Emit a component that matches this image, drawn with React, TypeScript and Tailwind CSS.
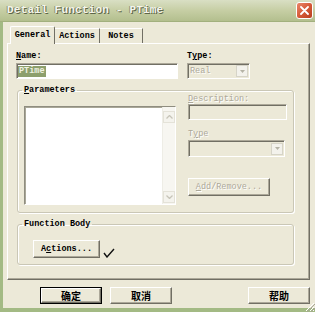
import React from 'react';

const raised =
  "border border-t-white border-l-white border-r-[#716f64] border-b-[#716f64] shadow-[inset_-1px_-1px_0_#aca899]";
const sunken =
  "border border-t-[#aca899] border-l-[#aca899] border-r-white border-b-white shadow-[inset_1px_1px_0_#716f64]";
const etched = "text-[#aca899] [text-shadow:1px_1px_0_#fff]";
const label = "text-[8.5px] leading-[9px] font-bold text-black";

function Chevron({ up }: { up?: boolean }) {
  return (
    <svg width="7" height="4" viewBox="0 0 7 4">
      <path
        d={up ? 'M0.5 3.5 L3.5 0.5 L6.5 3.5' : 'M0.5 0.5 L3.5 3.5 L6.5 0.5'}
        fill="none"
        stroke="#c6c4b8"
        strokeWidth="1.3"
      />
    </svg>
  );
}

function DropArrow() {
  return (
    <div className="w-[12px] h-[12px] border border-[#d6d4c8] bg-[#f3f2ec] flex items-center justify-center">
      <svg width="5" height="3" viewBox="0 0 5 3">
        <path d="M0 0 H5 L2.5 3 Z" fill="#b5b3a6" />
      </svg>
    </div>
  );
}

function Button({ children, isDefault }: { children: React.ReactNode; isDefault?: boolean }) {
  return (
    <div className={isDefault ? 'border border-black' : ''}>
      <div
        className={`${raised} ${isDefault ? 'w-[60px] h-[15px]' : 'w-[62px] h-[17px]'} bg-[#ece9d8] flex items-center justify-center text-[10px] font-bold text-black font-['Noto_Sans_CJK_SC',sans-serif]`}
      >
        {children}
      </div>
    </div>
  );
}

export default function App() {
  return (
    <div className="relative w-[315px] h-[312px] overflow-hidden bg-[#ece9d8] flex flex-col font-['Liberation_Mono','DejaVu_Sans_Mono',monospace]">
      {/* Title bar */}
      <div className="h-[22px] flex items-center justify-between pl-[7px] pr-[2px] bg-gradient-to-b from-[#d9dfc4] via-[#c6cea4] to-[#b3bf8e] border-b border-[#a2b07e]">
        <span className="text-[11px] font-bold tracking-[0.2px] text-[#f4f5ec] [text-shadow:1px_1px_0_#5e6648,-1px_0_0_#8c9470]">
          Detail Function - PTime
        </span>
        <div className="w-[17px] h-[17px] rounded-[3px] border border-white bg-gradient-to-br from-[#e9866a] via-[#d65a38] to-[#b9401f] flex items-center justify-center">
          <svg width="9" height="9" viewBox="0 0 9 9">
            <path d="M1 1 L8 8 M8 1 L1 8" stroke="#fff" strokeWidth="1.8" strokeLinecap="round" />
          </svg>
        </div>
      </div>

      {/* Body */}
      <div className="flex-1 flex flex-col border-l-[3px] border-b-[4px] border-[#a3ba84] pl-[4px] pt-[4px]">
        {/* Tabs */}
        <div className="h-[17px] flex items-end ml-[3px] text-[8.5px] font-bold text-black">
          <div className="relative z-10 -mb-px h-[18px] w-[45px] bg-[#ece9d8] border border-b-0 border-t-white border-l-white border-r-[#716f64] rounded-t-[2px] flex items-center justify-center">
            General
          </div>
          <div className="h-[15px] w-[45px] border-t border-r border-t-white border-r-[#716f64] flex items-center justify-center">
            Actions
          </div>
          <div className="h-[15px] w-[43px] border-t border-r border-t-white border-r-[#716f64] flex items-center justify-center">
            Notes
          </div>
        </div>

        {/* Tab panel */}
        <div className={`relative z-0 w-[303px] h-[237px] ${raised} bg-[#ece9d8] pl-[8px] pt-[8px]`}>
          <div className="flex gap-[9px]">
            <div className="w-[162px]">
              <div className={`${label} h-[11px]`}>
                <span className="underline">N</span>ame:
              </div>
              <div className={`${sunken} h-[16px] bg-white flex items-center pl-px`}>
                <span className="bg-[#8d9f6c] text-[#eef1e2] text-[8.5px] leading-[11px] font-bold px-px">PTime</span>
              </div>
            </div>
            <div className="w-[63px]">
              <div className={`${label} h-[11px]`}>
                T<span className="underline">y</span>pe:
              </div>
              <div className={`${sunken} h-[16px] bg-[#ece9d8] flex items-center justify-between pl-[2px] pr-px`}>
                <span className={`${etched} text-[8.5px]`}>Real</span>
                <DropArrow />
              </div>
            </div>
          </div>

          {/* Parameters group */}
          <fieldset className="ml-px mt-[7px] w-[277px] h-[127px] border border-[#cac7b6] rounded-[3px] shadow-[1px_1px_0_#fff,inset_1px_1px_0_#fff] px-[6px]">
            <legend className={`${label} -ml-[2px] px-[2px]`}>
              <span className="underline">P</span>arameters
            </legend>
            <div className="flex">
              <div className="mt-[11px] w-[152px] h-[99px] border border-t-[#8f8d80] border-l-[#8f8d80] border-r-white border-b-white shadow-[inset_1px_1px_0_#a9a798] bg-white flex justify-end">
                <div className="w-[13px] h-full bg-[#f7f6f1] border-l border-[#eeede6] flex flex-col justify-between pt-[4px] pb-px">
                  <div className="h-[12px] w-[12px] border border-[#e4e2d8] bg-[#f4f3ed] flex items-center justify-center">
                    <Chevron up />
                  </div>
                  <div className="h-[12px] w-[12px] border border-[#e4e2d8] bg-[#f4f3ed] flex items-center justify-center">
                    <Chevron />
                  </div>
                </div>
              </div>
              <div className="ml-[12px] w-[99px] flex flex-col">
                <div className={`${etched} text-[8.5px] leading-[9px] h-[9px]`}>
                  <span className="underline">D</span>escription:
                </div>
                <div className={`${sunken} h-[16px] w-[99px] bg-[#ece9d8]`} />
                <div className={`${etched} text-[8.5px] leading-[9px] h-[10px] mt-[10px]`}>
                  T<span className="underline">y</span>pe
                </div>
                <div className={`${sunken} h-[17px] w-[97px] bg-[#ece9d8] flex items-center justify-end pr-px`}>
                  <DropArrow />
                </div>
                <div className={`${raised} mt-[21px] h-[18px] w-[82px] bg-[#ece9d8] flex items-center justify-center`}>
                  <span className={`${etched} text-[8.5px]`}>
                    <span className="underline">A</span>dd/Remove...
                  </span>
                </div>
              </div>
            </div>
          </fieldset>

          {/* Function Body group */}
          <fieldset className="ml-px mt-[7px] w-[277px] h-[45px] border border-[#cac7b6] rounded-[3px] shadow-[1px_1px_0_#fff,inset_1px_1px_0_#fff]">
            <legend className={`${label} ml-[4px] px-[2px]`}>Function Body</legend>
            <div className="mt-[11px] pl-[15px] flex items-end">
              <div className={`${raised} h-[18px] w-[67px] bg-[#ece9d8] flex items-center justify-center text-[8.5px] font-bold text-black`}>
                A<span className="underline">c</span>tions...
              </div>
              <svg className="ml-[3px]" width="12" height="10" viewBox="0 0 12 10">
                <path d="M1 5 L4 9 L11 1" fill="none" stroke="#111" strokeWidth="1.4" />
              </svg>
            </div>
          </fieldset>
        </div>

        {/* Dialog buttons */}
        <div className="mt-[7px] ml-[33px] flex">
          <Button isDefault>确定</Button>
          <div className="ml-[8px]">
            <Button>取消</Button>
          </div>
          <div className="ml-[76px]">
            <Button>帮助</Button>
          </div>
        </div>
      </div>

      {/* Resize grip */}
      <svg className="absolute right-0 bottom-0" width="12" height="12" viewBox="0 0 12 12">
        <path d="M11 3 L3 11 M11 7 L7 11 M11 10 L10 11" stroke="#fff" strokeWidth="1" />
        <path d="M12 4 L4 12 M12 8 L8 12" stroke="#a6a495" strokeWidth="1" />
      </svg>
    </div>
  );
}
